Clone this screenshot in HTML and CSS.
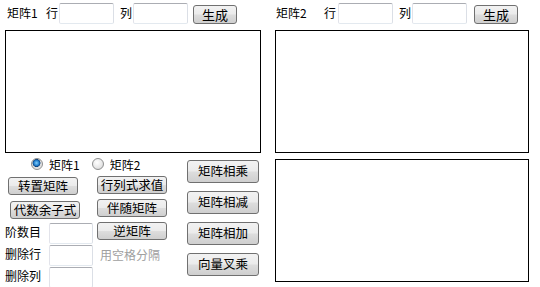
FILE: index.html
```html
<!DOCTYPE html>
<html lang="zh-CN">
<head>
  <meta charset="UTF-8">
  <title>矩阵计算器</title>
  <link rel="stylesheet" href="styles.css">
</head>
<body>
  <div class="page">
    <div class="col">
      <div class="head">
        <span class="name">矩阵1</span>
        <span class="lbl lbl-row">行</span>
        <input class="num" type="text">
        <span class="lbl lbl-col">列</span>
        <input class="num" type="text">
        <button class="btn btn-gen">生成</button>
      </div>
      <div class="box"></div>

      <div class="ops">
        <div class="ops-left">
          <div class="radios">
            <label class="radio"><input type="radio" name="m" checked> 矩阵1</label>
            <label class="radio radio-2"><input type="radio" name="m"> 矩阵2</label>
          </div>
          <div class="pair pair-1">
            <button class="btn btn-a">转置矩阵</button>
            <button class="btn btn-b">行列式求值</button>
          </div>
          <div class="pair pair-2">
            <button class="btn btn-a">代数余子式</button>
            <button class="btn btn-b">伴随矩阵</button>
          </div>
          <div class="lower">
            <div class="fields">
              <div class="field"><span>阶数目</span><input class="small" type="text"></div>
              <div class="field"><span>删除行</span><input class="small" type="text"></div>
              <div class="field"><span>删除列</span><input class="small" type="text"></div>
            </div>
            <div class="side">
              <button class="btn btn-inv">逆矩阵</button>
              <div class="hint">用空格分隔</div>
            </div>
          </div>
        </div>
        <div class="ops-right">
          <button class="btn btn-op">矩阵相乘</button>
          <button class="btn btn-op">矩阵相减</button>
          <button class="btn btn-op">矩阵相加</button>
          <button class="btn btn-op">向量叉乘</button>
        </div>
      </div>
    </div>

    <div class="col">
      <div class="head head-2">
        <span class="name">矩阵2</span>
        <span class="lbl lbl-row">行</span>
        <input class="num" type="text">
        <span class="lbl lbl-col">列</span>
        <input class="num" type="text">
        <button class="btn btn-gen">生成</button>
      </div>
      <div class="box"></div>
      <div class="box box-result"></div>
    </div>
  </div>
</body>
</html>
```

FILE: styles.css
```css
body {
  margin: 0;
  padding: 0 0 0 5px;
  font-family: "Noto Sans CJK SC", sans-serif;
  font-size: 12px;
  color: #000;
  background: #fff;
}
.page {
  display: grid;
  grid-template-columns: 256px 254px;
  column-gap: 14px;
}
.head {
  display: flex;
  align-items: flex-start;
  height: 30px;
  padding-top: 2px;
  box-sizing: border-box;
  line-height: 21px;
}
.head .num {
  margin-top: 1px;
}
.head .name {
  margin-left: 2px;
  width: 31px;
}
.head .lbl-row {
  margin-left: 8px;
  margin-right: 1px;
}
.head .lbl-col {
  margin-left: 6px;
  margin-right: 1px;
}
.head-2 .name {
  margin-left: 1px;
}
.head-2 .lbl-row {
  margin-left: 17px;
  margin-right: 2px;
}
.head-2 .btn-gen {
  margin-left: 7px;
}
input[type="text"] {
  box-sizing: border-box;
  border: 1px solid;
  border-color: #abadb3 #dbdfe6 #e3e9ef #e2e3ea;
  border-radius: 2px;
  padding: 0 2px;
  font: inherit;
  background: #fff;
}
.num {
  width: 55px;
  height: 21px;
}
.btn {
  box-sizing: border-box;
  font-family: inherit;
  font-size: 12px;
  color: #000;
  padding: 0;
  border: 1px solid #707070;
  border-radius: 3px;
  background: linear-gradient(#f2f2f2 0%, #ebebeb 48%, #dddddd 52%, #cfcfcf 100%);
  line-height: 1;
  cursor: pointer;
}
.btn-gen {
  width: 44px;
  height: 19px;
  margin-left: 5px;
  margin-top: 3px;
  font-size: 13px;
}
.box {
  box-sizing: border-box;
  height: 123px;
  border: 1px solid #000;
}
.box-result {
  margin-top: 6px;
}
.ops {
  display: flex;
}
.ops-left {
  width: 178px;
}
.ops-right {
  display: flex;
  flex-direction: column;
  gap: 8px;
  margin-top: 7px;
  margin-left: 4px;
}
.btn-op {
  width: 72px;
  height: 23px;
  font-size: 12.5px;
}
.radios {
  display: flex;
  align-items: center;
  height: 14px;
  margin-top: 4px;
  padding-left: 26px;
}
.radio {
  display: flex;
  align-items: center;
  gap: 6px;
}
.radio-2 {
  margin-left: 12px;
}
.radio input {
  appearance: none;
  margin: 0;
  width: 12px;
  height: 12px;
  border-radius: 50%;
  border: 1px solid #8e8f8f;
  background: radial-gradient(circle at 40% 35%, #fff 0%, #e6e6e6 60%, #c9c9c9 100%);
}
.radio input:checked {
  background: radial-gradient(circle at 45% 40%, #7fd0ff 0%, #1a74c4 35%, #0a3f7a 45%, #dcdcdc 52%, #f4f4f4 100%);
}
.pair {
  display: flex;
  align-items: flex-start;
}
.pair-1 {
  margin-top: 5px;
  height: 19px;
}
.pair-2 {
  height: 24px;
}
.btn-a,
.btn-b,
.btn-inv {
  width: 70px;
  height: 18px;
  font-size: 12.5px;
}
.pair-1 .btn-a {
  margin-top: 1px;
  margin-left: 3px;
}
.pair-1 .btn-b {
  margin-left: 19px;
}
.pair-2 .btn-a {
  margin-top: 6px;
  margin-left: 5px;
}
.pair-2 .btn-b {
  margin-top: 4px;
  margin-left: 17px;
}
.lower {
  display: flex;
}
.fields {
  margin-top: 3px;
}
.field {
  display: flex;
  align-items: center;
  height: 22px;
}
.field span {
  width: 44px;
  margin-bottom: 3px;
}
.small {
  width: 44px;
  height: 21px;
}
.side {
  margin-left: 4px;
  margin-top: 3px;
}
.hint {
  margin-top: 6px;
  margin-left: 3px;
  color: #a0a0a0;
}
```
